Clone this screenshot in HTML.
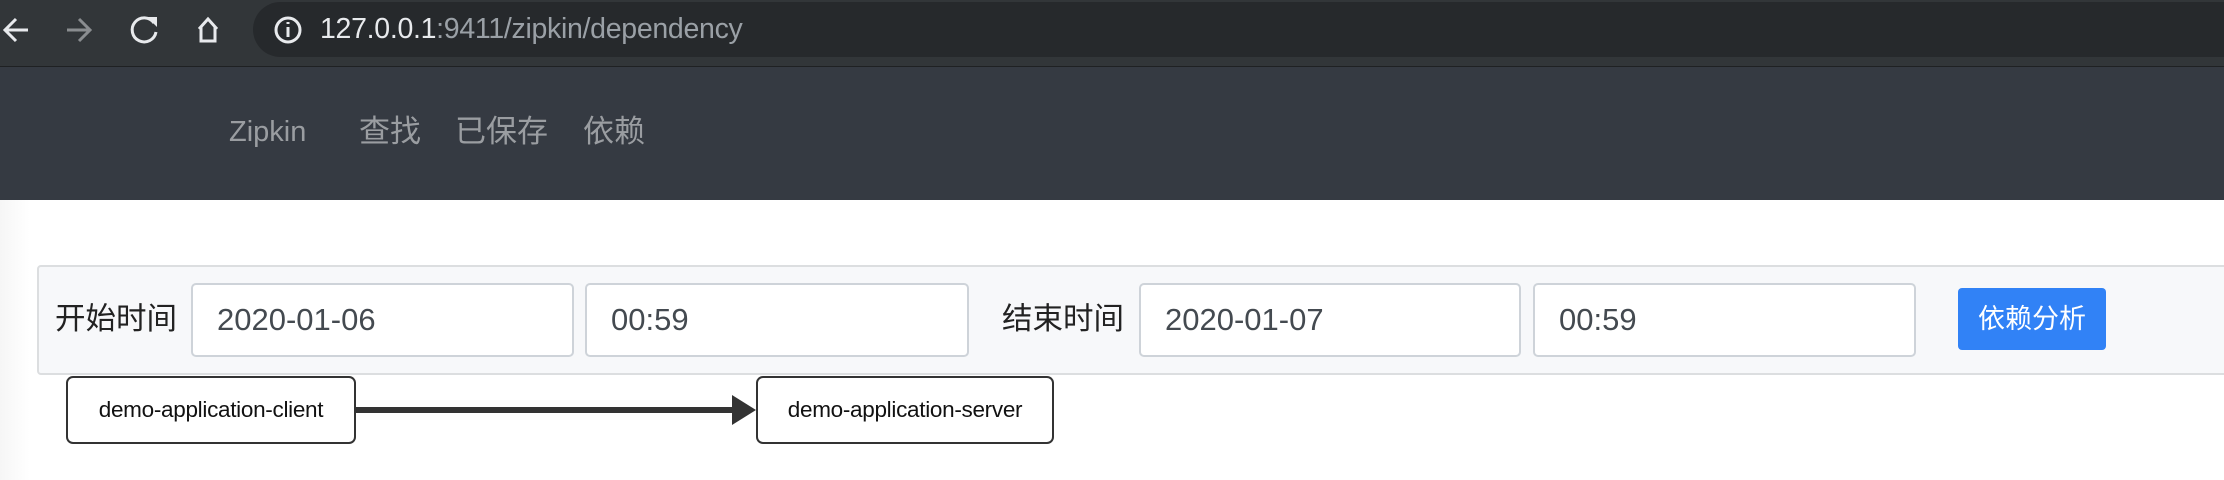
<!DOCTYPE html>
<html><head><meta charset="utf-8"><style>
*{margin:0;padding:0;box-sizing:border-box}
body{width:2224px;height:480px;overflow:hidden;background:#fff;font-family:"Liberation Sans","Noto Sans CJK SC",sans-serif;position:relative}
.top{position:absolute;left:0;top:0;width:2224px;height:67px;background:#323639}
.pill{position:absolute;left:253px;top:2px;width:2100px;height:55px;border-radius:28px;background:#26292c}
.url{position:absolute;left:320px;top:11px;font-size:28.5px;color:#9aa0a6;line-height:36px;letter-spacing:-0.3px}
.url b{font-weight:normal;color:#e8eaed}
.sep{position:absolute;left:0;top:66px;width:2224px;height:1px;background:#1f2123}
.nav{position:absolute;left:0;top:67px;width:2224px;height:133px;background:#353a42}
.nav span{position:absolute;top:45px;font-size:31px;color:#9a9da1;line-height:40px}
.shade{position:absolute;left:0;top:200px;width:30px;height:280px;background:linear-gradient(90deg,#f6f6f6,#fff)}
.panel{position:absolute;left:37px;top:265px;width:2200px;height:110px;background:#f7f8fa;border:2px solid #dcdee0;border-radius:4px}
.lbl{position:absolute;top:299px;font-size:30.5px;color:#222;line-height:40px}
.inp{position:absolute;top:283px;height:74px;background:#fff;border:2px solid #ced3d9;border-radius:5px;font-size:31px;color:#444a50;padding-left:24px;line-height:70px}
.btn{position:absolute;left:1958px;top:288px;width:148px;height:62px;background:#3182f6;border-radius:4px;color:#fff;font-size:27px;line-height:62px;text-align:center}
.node{position:absolute;top:376px;height:68px;border:2px solid #333;border-radius:7px;background:#fff;font-size:22.5px;color:#111;text-align:center;line-height:64px;letter-spacing:-0.3px}
</style></head><body>
<div class="top">
<div class="pill"></div>
<svg width="340" height="60" style="position:absolute;left:0;top:0" fill="none" stroke-width="3">
<path d="M28 30H5M16 19L5 30L16 41" stroke="#e8eaed"/>
<path d="M67 30H90M79 19L90 30L79 41" stroke="#8a8d90"/>
<path d="M154 23A12 12 0 1 0 156 32" stroke="#e8eaed"/><path d="M147 17H157V27Z" fill="#e8eaed" stroke="none"/>
<path d="M199 29L208 19L217 29M201 27V41H215V27" stroke="#e8eaed"/>
<circle cx="288" cy="30" r="12" stroke="#e8eaed"/><path d="M288 27V37M288 22V24" stroke="#e8eaed"/>
</svg>
<div class="url"><b>127.0.0.1</b>:9411/zipkin/dependency</div>
</div>
<div class="sep"></div>
<div class="nav"><span style="left:229px;font-size:29px">Zipkin</span><span style="left:359px">查找</span><span style="left:455px">已保存</span><span style="left:583px">依赖</span></div>
<div class="shade"></div>
<div class="panel"></div>
<div class="lbl" style="left:55px">开始时间</div>
<div class="inp" style="left:191px;width:383px">2020-01-06</div>
<div class="inp" style="left:585px;width:384px">00:59</div>
<div class="lbl" style="left:1002px">结束时间</div>
<div class="inp" style="left:1139px;width:382px">2020-01-07</div>
<div class="inp" style="left:1533px;width:383px">00:59</div>
<div class="btn">依赖分析</div>
<svg width="2224" height="480" style="position:absolute;left:0;top:0">
<line x1="355" y1="410" x2="735" y2="410" stroke="#333" stroke-width="6"/>
<path d="M732 395L756 410L732 425Z" fill="#333"/>
</svg>
<div class="node" style="left:66px;width:290px">demo-application-client</div>
<div class="node" style="left:756px;width:298px">demo-application-server</div>
</body></html>
